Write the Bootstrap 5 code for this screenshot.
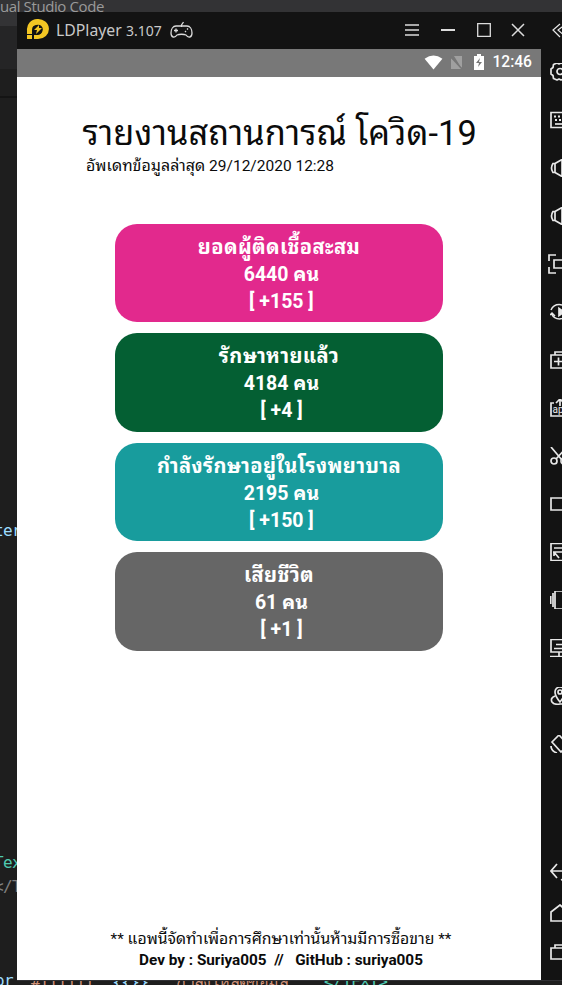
<!DOCTYPE html>
<html lang="th">
<head>
<meta charset="utf-8">
<meta name="viewport" content="width=device-width, initial-scale=1">
<title>LDPlayer</title>
<link href="https://cdn.jsdelivr.net/npm/bootstrap@5.3.0/dist/css/bootstrap.min.css" rel="stylesheet">
<style>
body{background:#1e1e1e;font-family:Roboto,"Noto Sans Thai Looped","Noto Looped Thai","Droid Sans Thai",Loma,Waree,"Noto Sans Thai","Noto Sans",sans-serif;color:#0b0b0b}
.desk{height:985px;width:562px}
.editor-title{height:12px;background:#333335;color:#9a9a9a;font:15px/13px "Open Sans","Noto Sans",sans-serif;letter-spacing:-.4px}
.gutter{width:17px;background:linear-gradient(#333335 0 14px,#252526 14px 57px,#1e1e1e 57px 84px,#141414 84px 86px,#1e1e1e 86px)}
.gutter div{margin-right:-4px}
.code{font:16px/24px "DejaVu Sans Mono",monospace;letter-spacing:-.6px}
.ln-a{margin-top:507px;color:#9cdcfe}
.ln-b{margin-top:308px;color:#4ec9b0}
.ln-c{color:#808080}
.gutter .ln-d{margin-top:70px;margin-right:4px;color:#9cdcfe}
.code-bottom{height:5px;border-top:1px solid #303033;line-height:2px;padding-left:14px;color:#ce9178;white-space:pre}
.emu{width:524px}
.titlebar{height:37px;background:#131313;color:#c9c9c9;font:15.8px/37px "Noto Sans",sans-serif;padding:0 16px 0 9px}
.titlebar small{font-size:14px}
.brand{padding-left:7px}
.tools{gap:22px}
.status{height:28px;background:#787878;font-size:15.6px;font-weight:500;padding-right:9px}
.screen{padding-top:33px}
.headline{font-size:34.3px;line-height:46px;padding-left:65.5px;letter-spacing:.11px}
.updated{font-size:15.5px;line-height:20px;padding-left:69px}
.th{font-size:1.03em;letter-spacing:.02px;line-height:1}
.stats{margin-top:48px;gap:11px}
.stat{width:328px;height:98.5px;border-radius:22px;font-size:19.5px;line-height:27px;padding-top:10px}
.stat div{height:27px}
.stat .th{letter-spacing:.37px}
.pink{background:#e2298d}.green{background:#045f33}.teal{background:#189c9d}.gray{background:#666}
.foot{font-size:15.3px;line-height:21px;padding-bottom:9px;padding-left:4px}
.foot div{height:21px}
.rail{width:21px;background:#131313;padding-left:9px}
.rail svg{width:18px;height:18px;flex:none;margin-bottom:30px;stroke:#e8e8e8;stroke-width:1.7}
.rail .i-first{margin:9px 0 24px 1px;stroke-width:1.2}
.rail .i-back{margin:80px 0 23px}
.rail .i-home{margin-bottom:21px}
.rail .i-last{margin:0}
svg{fill:none;stroke:#dcdcdc;stroke-width:1.5;display:block;flex:none}
</style>
</head>
<body>
<div class="desk d-flex flex-column overflow-hidden">
  <div class="editor-title overflow-hidden text-nowrap">ual Studio Code</div>
  <div class="d-flex flex-grow-1 overflow-hidden">
    <div class="gutter code d-flex flex-column flex-shrink-0 overflow-hidden text-nowrap align-items-end">
      <div class="ln-a">ter</div>
      <div class="ln-b">Tex</div>
      <div class="ln-c">&lt;/T</div>
      <div class="ln-d">or</div>
    </div>
    <div class="d-flex flex-column flex-grow-1 overflow-hidden">
    <div class="d-flex flex-grow-1 overflow-hidden">
    <main class="emu bg-white d-flex flex-column flex-shrink-0">
      <div class="titlebar d-flex align-items-center">
        <svg width="23" height="22" viewBox="0 0 23 22"><path d="M1 11A11 10 0 1 1 12 20H8v-4h4a5 5 0 1 0-6-5v4H1z" fill="#f3c623" stroke="none"/><path d="M1 16h5v4H1z" fill="#f3c623" stroke="none"/><circle cx="12" cy="10.500" r="4.800" fill="#131313" stroke="none"/><path d="m13 6-5 5h3l-1 4 6-6h-3z" fill="#f3c623" stroke="none"/></svg>
        <span class="brand">LDPlayer <small>3.107</small></span>
        <svg class="ms-2" width="23" height="18" viewBox="0 0 23 18" style="stroke-width:1.300"><path d="M11.500 6V4l2-3M6 5h11c3 0 5 3 5 7 0 5-4 5-6 2-2-1-7-1-9 0-2 3-6 3-6-2 0-4 2-7 5-7zM4 9.500h4M6 7.500v4M15 11l1-1M17 8.500l1-1"/></svg>
        <div class="ms-auto d-flex align-items-center tools">
          <svg width="14" height="14"><path d="M0 2h14M0 7h14M0 12h14"/></svg>
          <svg width="14" height="14"><path d="M0 7h14" stroke-width="2"/></svg>
          <svg width="14" height="14"><path d="M.7.7h12.600v12.600H.7z" stroke-width="1.300"/></svg>
          <svg style="margin-left:-2px" width="14" height="14"><path d="m1 1 12 12M13 1 1 13"/></svg>
        </div>
      </div>
      <div class="status d-flex align-items-center justify-content-end text-white">
        <svg width="19" height="15" viewBox="0 0 20 16"><path d="M.5 4Q10-3 19.500 4L10 15.500z" fill="#fff" stroke="none"/></svg>
        <svg style="margin-left:7px" width="13" height="15"><path d="M4 1h8v12L1 3v11h11" fill="#a0a0a0" stroke="none"/><path d="m0 1 12 13" stroke="#777"/></svg>
        <svg style="margin-left:10px" width="12" height="17"><path d="M1 2h3V0h4v2h3v14H1z" fill="#fff" stroke="none"/><path d="m7 4-4 5h3l-1 4 4-5H6z" fill="#777" stroke="none"/></svg>
        <span style="margin-left:7px">12:46</span>
      </div>
      <section class="screen d-flex flex-column flex-grow-1 text-nowrap">
        <h1 class="headline fw-normal m-0">รายงานสถานการณ์ โควิด-19</h1>
        <div class="updated"><span class="th">อัพเดทข้อมูลล่าสุด</span> 29/12/2020 12:28</div>
        <div class="stats d-flex flex-column align-items-center">
          <div class="stat pink text-white text-center fw-bold"><div><span class="th">ยอดผู้ติดเชื้อสะสม</span></div><div>&nbsp;6440 คน</div><div>&nbsp;[ +155 ]</div></div>
          <div class="stat green text-white text-center fw-bold"><div><span class="th">รักษาหายแล้ว</span></div><div>&nbsp;4184 คน</div><div>&nbsp;[ +4 ]</div></div>
          <div class="stat teal text-white text-center fw-bold"><div><span class="th">กำลังรักษาอยู่ในโรงพยาบาล</span></div><div>&nbsp;2195 คน</div><div>&nbsp;[ +150 ]</div></div>
          <div class="stat gray text-white text-center fw-bold"><div><span class="th">เสียชีวิต</span></div><div>&nbsp;61 คน</div><div>&nbsp;[ +1 ]</div></div>
        </div>
        <footer class="foot mt-auto text-center"><div>** <span class="th">แอพนี้จัดทำเพื่อการศึกษาเท่านั้นห้ามมีการซื้อขาย</span> **</div><div class="fw-bold">Dev by : Suriya005 &nbsp;// &nbsp; GitHub : suriya005</div></footer>
      </section>
    </main>
    <aside class="rail d-flex flex-column overflow-hidden">
      <svg class="i-first" viewBox="0 0 18 18"><path d="M9 3 2 9l7 7M15 3 7 9l8 7"/></svg>
      <svg viewBox="0 0 18 18"><path d="m7 0-3.500 1.500-.5 3L1 6v5l2 1.500.5 3L7 17l2-1 2 1 3.500-1.500.5-3 2-1.500V6l-2-1.500-.5-3L11 0 9 1z" stroke-linejoin="round"/><circle cx="10" cy="8.500" r="3"/></svg>
      <svg viewBox="0 0 18 18"><path d="M1 1.500h17v15H1z"/><path d="M4 5.500h13M5 9h12" stroke-width="2" stroke-dasharray="2 2"/><path d="M5 13h11"/></svg>
      <svg viewBox="0 0 18 18"><path d="M5 4.500H3Q0 9 3 13.500h2zl7-4v17l-7-4"/></svg>
      <svg viewBox="0 0 18 18"><path d="M5 4.500H3Q0 9 3 13.500h2zl7-4v17l-7-4"/></svg>
      <svg viewBox="0 0 18 18" overflow="visible"><path d="M6 0H-1v6M-1 12v6h7M4 5h14v8H4z"/></svg>
      <svg viewBox="0 0 18 18"><path d="M1 7a9 9 0 0 1 16.500 0M17.500 11a9 9 0 0 1-16 0M0 12l2-2 3 3" stroke-width="1.500"/><path d="m9 5.500 5 3.500-5 3.500z" fill="#e8e8e8"/></svg>
      <svg viewBox="0 0 18 18"><path d="M1 4h17v13H1zM5 4V1h9v3M4 10.500h9M8.500 6.500v8"/></svg>
      <svg viewBox="0 0 18 18"><path d="M4 4H1v13h16V4h-3M10 7V0M6 4l4-4 4 4"/><text x="2.500" y="14" font-family="Roboto" font-size="10" stroke="none" fill="#e8e8e8">apk</text></svg>
      <svg viewBox="0 0 18 18"><path d="m1 0 11 13M17 0 6 12"/><circle cx="4" cy="14" r="3"/><circle cx="14" cy="14" r="3"/></svg>
      <svg viewBox="0 0 18 18"><path d="M1 3h17v12H1z"/></svg>
      <svg viewBox="0 0 18 18"><path d="M1 .5h17v17H1zM4 5h12M3 9h14M4 9l5 6M4 9v4"/></svg>
      <svg viewBox="0 0 18 18"><path d="M5 0h12v18H5zM3 2v14M.7 5v8"/></svg>
      <svg viewBox="0 0 18 18"><path d="M1 .5h17V13H1zM4 9.500h10M6 5.500h9M9 13v4M0 17.500h18"/></svg>
      <svg viewBox="0 0 18 18"><path d="M10 15Q5 9 5 5a5 5 0 0 1 10 0q0 4-5 10zM5 9q-5 2-3 6 2 3 8 2h8"/><circle cx="10" cy="5" r="2"/></svg>
      <svg viewBox="0 0 18 18"><path d="m2 7 7-7 9 10-7 7zM1 11q0 5 6 7"/></svg>
      <svg class="i-back" viewBox="0 0 18 18"><path d="M7 1 1 8l6 7M1 8h12q6 5-2 9"/></svg>
      <svg class="i-home" viewBox="0 0 18 18"><path d="M1 8v9h17V8l-8-7z"/></svg>
      <svg class="i-last" viewBox="0 0 18 18"><path d="M1 5h12v11H1zM5 5V2h12v11h-4"/></svg>
    </aside>
    </div>
    <div class="code code-bottom overflow-hidden text-nowrap"><span style="white-space:pre">#ffffff  <span style="color:#9cdcfe">{{}}</span>  "กำลังโหลดข้อมูล"   <span style="color:#4ec9b0">&lt;/TEXT&gt;</span></span></div>
    </div>
  </div>
</div>
<script src="https://cdn.jsdelivr.net/npm/bootstrap@5.3.0/dist/js/bootstrap.bundle.min.js"></script>
</body>
</html>
